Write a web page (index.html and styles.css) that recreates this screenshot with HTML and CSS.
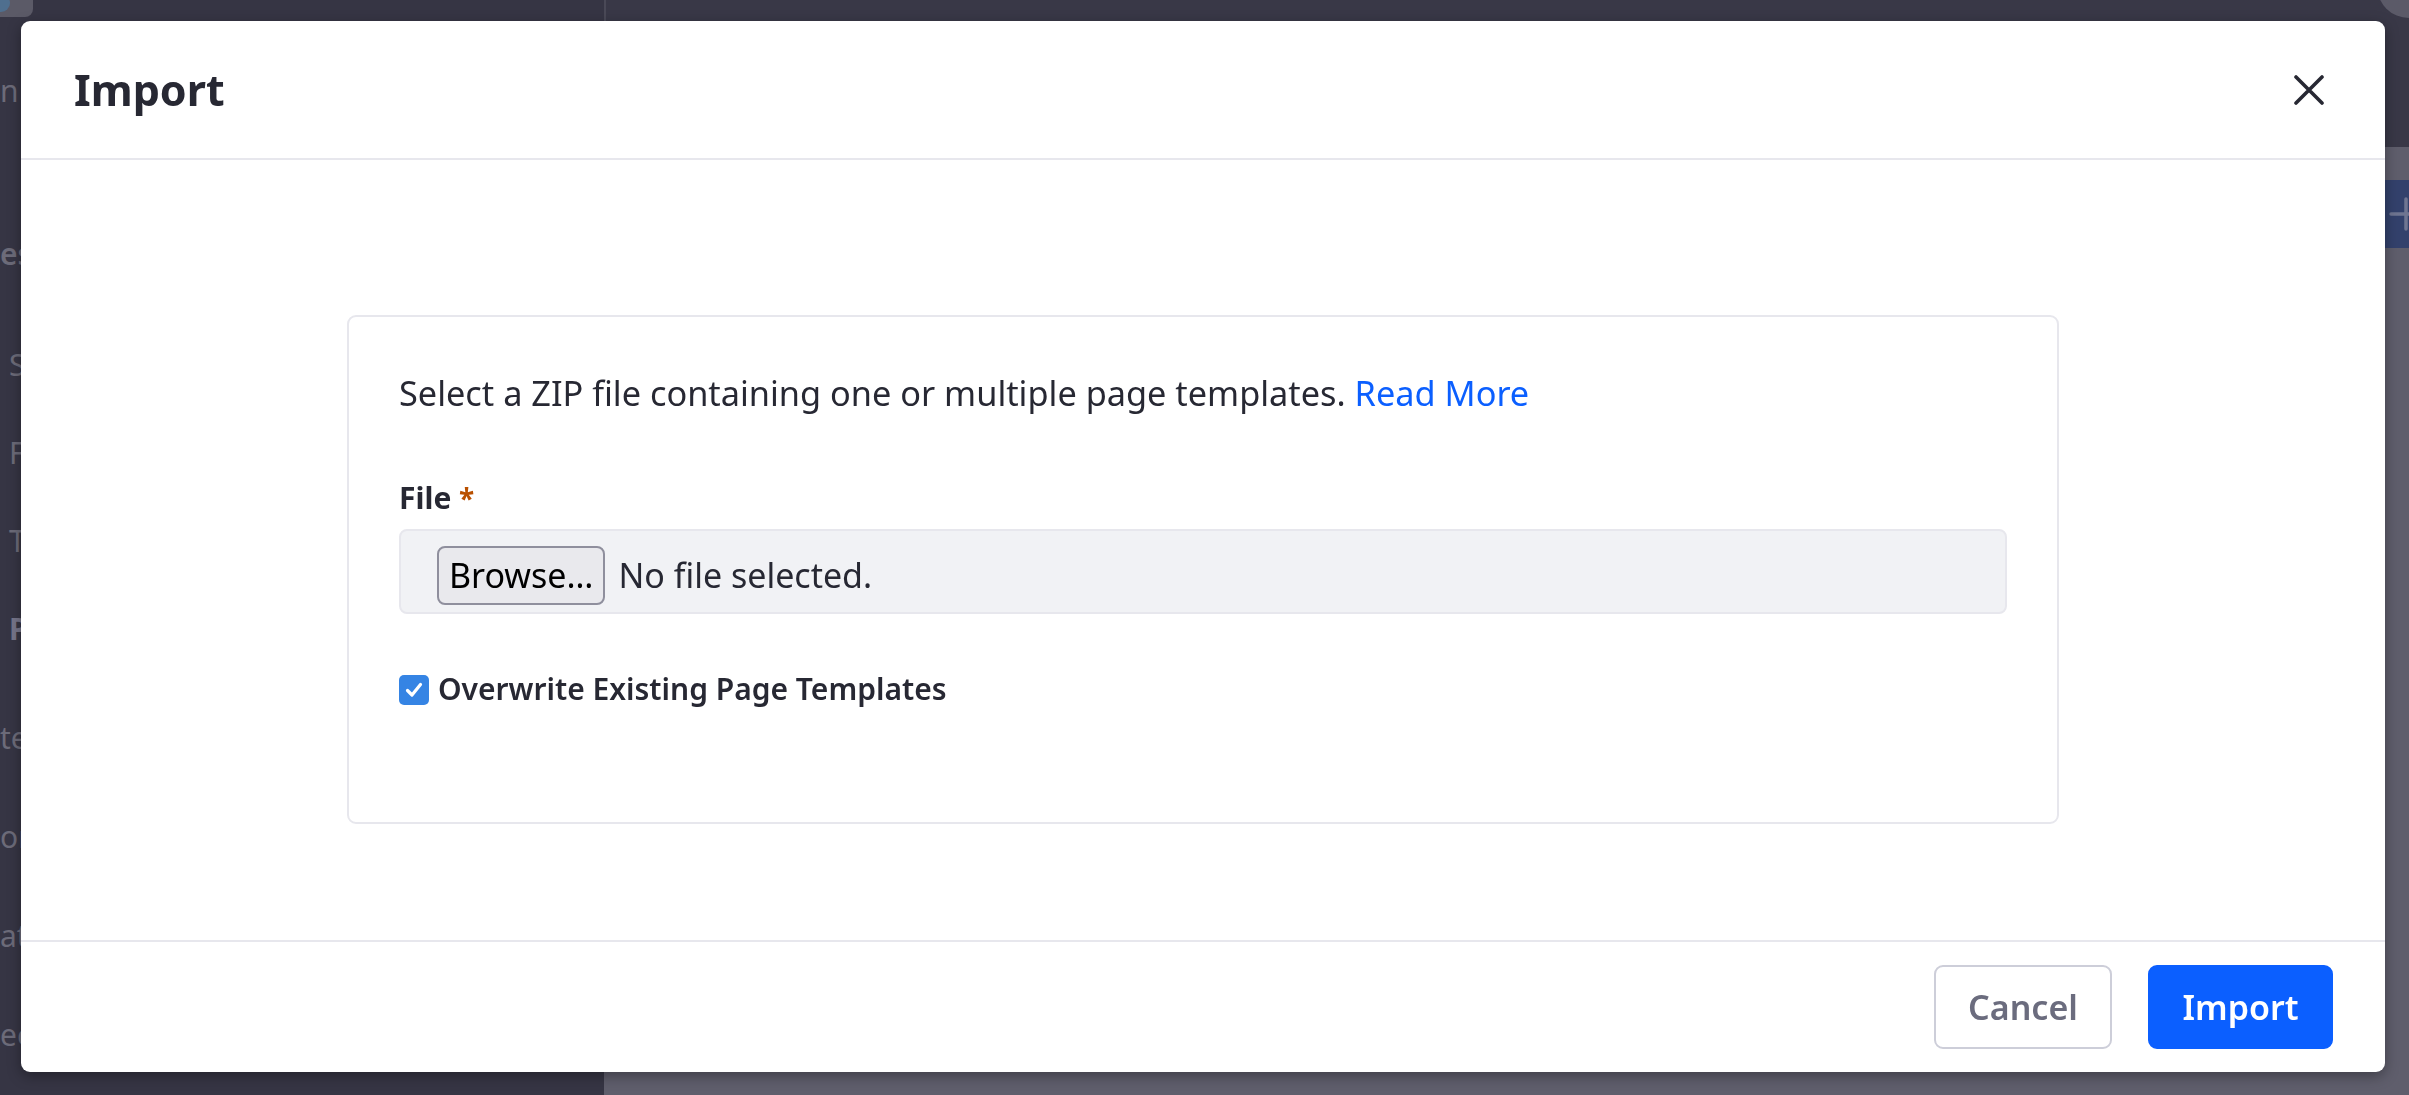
FILE: index.html
```html
<!DOCTYPE html>
<html lang="en">
<head>
<meta charset="utf-8">
<title>Import</title>
<link rel="stylesheet" href="styles.css">
</head>
<body>
<div class="app">
  <aside class="sidebar">
    <div class="side-top"><span class="prod-btn"><span class="prod-dot"></span></span></div>
    <div class="side-site"><span class="frag">n</span></div>
    <div class="side-head"><span class="frag">es</span></div>
    <ul class="side-nav">
      <li class="nav-item">Style Books</li>
      <li class="nav-item">Fragments</li>
      <li class="nav-item">Templates</li>
      <li class="nav-item active">Page Templates</li>
    </ul>
    <ul class="side-nav side-sections">
      <li class="sec-item"><span class="frag">te</span></li>
      <li class="sec-item"><span class="frag">or</span></li>
      <li class="sec-item"><span class="frag">at</span></li>
      <li class="sec-item"><span class="frag">ec</span></li>
    </ul>
  </aside>
  <main class="main">
    <header class="topbar">
      <span class="avatar"></span>
    </header>
    <div class="toolbar">
      <span class="add-btn">
        <svg width="34" height="34" viewBox="0 0 34 34"><path d="M17 2V32M2 17H32" stroke="#6f7591" stroke-width="3.5" stroke-linecap="round" fill="none"/></svg>
      </span>
    </div>
  </main>
</div>

<div class="modal" role="dialog">
  <div class="modal-header">
    <h1 class="modal-title">Import</h1>
    <button class="close" type="button" aria-label="Close">
      <svg width="30" height="30" viewBox="0 0 30 30"><path d="M2 2L28 28M28 2L2 28" stroke="#272833" stroke-width="3.6" stroke-linecap="round" fill="none"/></svg>
    </button>
  </div>
  <div class="modal-body">
    <div class="sheet">
      <p class="lead-text">Select a ZIP file containing one or multiple page templates. <a class="link" href="#">Read More</a></p>
      <div class="form-group">
        <div class="label">File <span class="req">*</span></div>
        <div class="file-field">
          <span class="browse">Browse…</span>
          <span class="file-name">No file selected.</span>
        </div>
      </div>
      <div class="check">
        <span class="check-box">
          <svg width="22" height="22" viewBox="0 0 22 22"><path d="M4.5 11.5L9 16L17.5 5.5" stroke="#fff" stroke-width="3.2" stroke-linecap="round" stroke-linejoin="round" fill="none"/></svg>
        </span>
        <span class="check-label">Overwrite Existing Page Templates</span>
      </div>
    </div>
  </div>
  <div class="modal-footer">
    <button class="btn btn-secondary" type="button">Cancel</button>
    <button class="btn btn-primary" type="button">Import</button>
  </div>
</div>
</body>
</html>
```

FILE: styles.css
```css
* { box-sizing: border-box; }

html, body {
  margin: 0;
  padding: 0;
}

body {
  width: 2409px;
  height: 1095px;
  overflow: hidden;
  background: #5f5e6c;
  font-family: "Noto Sans", "Open Sans", sans-serif;
  color: #272833;
}

/* ---------- dimmed background application ---------- */
.app {
  display: flex;
  height: 100%;
}

.sidebar {
  width: 604px;
  flex-shrink: 0;
  background: #363544;
  color: #6c6b79;
  font-size: 30px;
  overflow: hidden;
}

.side-top {
  height: 60px;
}

.prod-btn {
  display: block;
  width: 33px;
  height: 17px;
  background: #5b5a67;
  border-radius: 0 0 8px 0;
  overflow: hidden;
}

.prod-dot {
  display: block;
  width: 18px;
  height: 18px;
  border-radius: 50%;
  background: #4f6f8f;
  margin-left: -8px;
  margin-top: -6px;
}

.side-site {
  height: 60px;
  display: flex;
  align-items: center;
  white-space: nowrap;
}

.side-head {
  margin-top: 103px;
  height: 60px;
  display: flex;
  align-items: center;
  white-space: nowrap;
  font-weight: 600;
}

.frag { white-space: nowrap; }

.side-nav {
  list-style: none;
  margin: 0;
  padding: 0;
}

.side-nav:first-of-type {
  margin-top: 37px;
}

.nav-item {
  height: 88px;
  display: flex;
  align-items: center;
  padding-left: 9px;
  white-space: nowrap;
}

.nav-item.active {
  font-weight: 700;
  color: #77768a;
}

.side-sections {
  margin-top: 16px;
}

.sec-item {
  height: 99px;
  display: flex;
  align-items: center;
  white-space: nowrap;
}

.main {
  flex: 1;
  display: flex;
  flex-direction: column;
  min-width: 0;
}

.topbar {
  height: 147px;
  background: #393847;
  border-left: 2px solid #4a4957;
  display: flex;
  justify-content: flex-end;
  overflow: hidden;
}

.avatar {
  width: 64px;
  height: 64px;
  border-radius: 50%;
  background: #5b5a68;
  margin-top: -46px;
  margin-right: -32px;
  flex-shrink: 0;
}

.toolbar {
  display: flex;
  justify-content: flex-end;
  padding-top: 33px;
}

.add-btn {
  width: 70px;
  height: 68px;
  background: #33416c;
  border-radius: 9px;
  margin-right: -32px;
  display: flex;
  align-items: center;
  justify-content: center;
  flex-shrink: 0;
}

/* ---------- modal ---------- */
.modal {
  position: fixed;
  left: 21px;
  top: 21px;
  width: 2364px;
  height: 1051px;
  background: #fff;
  border-radius: 9px;
  box-shadow: 0 4px 14px rgba(0, 0, 0, 0.35);
  display: flex;
  flex-direction: column;
  overflow: hidden;
}

.modal-header {
  height: 139px;
  flex-shrink: 0;
  border-bottom: 2px solid #e7e7ed;
  display: flex;
  align-items: center;
  justify-content: space-between;
  padding: 0 61px 0 53px;
}

.modal-title {
  margin: 0;
  font-size: 43px;
  font-weight: 700;
  line-height: 1.2;
  color: #272833;
}

.close {
  width: 30px;
  height: 30px;
  padding: 0;
  border: 0;
  background: transparent;
  display: flex;
  margin-top: 1px;
}

.modal-body {
  flex: 1;
  padding: 155px 326px 0;
}

.sheet {
  height: 509px;
  border: 2px solid #e7e7ed;
  border-radius: 9px;
  padding: 50px 50px 0;
}

.lead-text {
  margin: 0;
  font-size: 34.3px;
  line-height: 51px;
  color: #272833;
}

.link {
  color: #0b5fff;
  text-decoration: none;
}

.form-group {
  margin-top: 57px;
}

.label {
  font-size: 30px;
  font-weight: 700;
  line-height: 45px;
  color: #272833;
  margin-bottom: 8px;
}

.req {
  color: #b95000;
  font-size: 28px;
}

.file-field {
  height: 85px;
  background: #f1f2f5;
  border: 2px solid #e7e7ed;
  border-radius: 8px;
  padding: 15px 36px 0;
  display: flex;
  align-items: flex-start;
}

.browse {
  height: 59px;
  padding: 0 10px;
  border: 2px solid #8f8f9d;
  border-radius: 8px;
  background: #e9e9ed;
  color: #000;
  font-size: 34px;
  line-height: 55px;
  white-space: nowrap;
}

.file-name {
  margin-left: 13px;
  font-size: 34px;
  line-height: 59px;
  color: #272833;
  white-space: nowrap;
}

.check {
  margin-top: 52px;
  display: flex;
  align-items: center;
  height: 45px;
}

.check-box {
  width: 30px;
  height: 30px;
  border-radius: 5px;
  background: #3584e4;
  display: flex;
  align-items: center;
  justify-content: center;
  flex-shrink: 0;
  margin-top: 3px;
}

.check-label {
  margin-left: 9px;
  font-size: 30px;
  font-weight: 600;
  line-height: 45px;
  color: #272833;
  white-space: nowrap;
}

.modal-footer {
  flex-shrink: 0;
  height: 132px;
  border-top: 2px solid #e7e7ed;
  display: flex;
  justify-content: flex-end;
  align-items: center;
  gap: 36px;
  padding: 0 52px 0 0;
}

.btn {
  height: 84px;
  padding: 0 32px;
  border-radius: 9px;
  font-family: "Noto Sans", "Open Sans", sans-serif;
  font-size: 34px;
  font-weight: 600;
  display: flex;
  align-items: center;
  justify-content: center;
  cursor: pointer;
}

.btn-secondary {
  width: 178px;
  background: #fff;
  border: 2px solid #cdced9;
  color: #6b6c7e;
}

.btn-primary {
  width: 185px;
  background: #0b5fff;
  border: 2px solid #0b5fff;
  color: #fff;
}
```
